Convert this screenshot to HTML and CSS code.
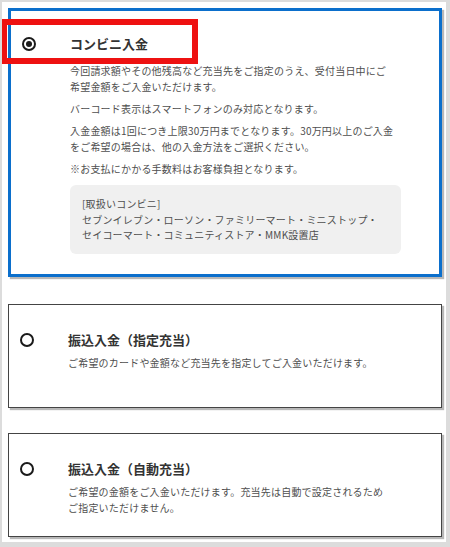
FILE: index.html
```html
<!DOCTYPE html>
<html lang="ja">
<head>
<meta charset="utf-8">
<title>入金方法</title>
<link rel="stylesheet" href="styles.css">
</head>
<body>
<div class="frame">
  <div class="card selected">
    <span class="radio checked"></span>
    <div class="body">
      <h2 class="title">コンビニ入金</h2>
      <p class="text">今回請求額やその他残高など充当先をご指定のうえ、受付当日中にご<br>希望金額をご入金いただけます。</p>
      <p class="text">バーコード表示はスマートフォンのみ対応となります。</p>
      <p class="text">入金金額は1回につき上限30万円までとなります。30万円以上のご入金<br>をご希望の場合は、他の入金方法をご選択ください。</p>
      <p class="text">※お支払にかかる手数料はお客様負担となります。</p>
      <div class="note">[取扱いコンビニ]<br>セブンイレブン・ローソン・ファミリーマート・ミニストップ・<br>セイコーマート・コミュニティストア・MMK設置店</div>
    </div>
  </div>
  <div class="card">
    <span class="radio"></span>
    <div class="body">
      <h2 class="title">振込入金（指定充当）</h2>
      <p class="text">ご希望のカードや金額など充当先を指定してご入金いただけます。</p>
    </div>
  </div>
  <div class="card">
    <span class="radio"></span>
    <div class="body">
      <h2 class="title">振込入金（自動充当）</h2>
      <p class="text">ご希望の金額をご入金いただけます。充当先は自動で設定されるため<br>ご指定いただけません。</p>
    </div>
  </div>
  <div class="highlight"></div>
</div>
</body>
</html>
```
FILE: styles.css
```css
* { box-sizing: border-box; }
html, body { margin: 0; padding: 0; background: #fff; }
body {
  font-family: "Noto Sans CJK JP", "Noto Sans", sans-serif;
  color: #4e4e4e;
}
.frame {
  position: relative;
  width: 450px;
  height: 547px;
  border-style: solid;
  border-color: #dcdcdc;
  border-width: 2px 4px 5px 2px;
  padding: 6px 4px 0 6px;
  display: flex;
  flex-direction: column;
  gap: 25px;
  overflow: hidden;
}
.card {
  display: flex;
  align-items: flex-start;
  border: 1px solid #444;
  background: #fff;
  box-shadow: 2px 2px 1px #b8b8b8;
  padding: 25px 38px 20px 11px;
  min-height: 104px;
}
.card.selected {
  border: 3px solid #0b6fcc;
  padding-top: 23px;
  padding-bottom: 20px;
  margin-bottom: 2px;
}
.radio {
  flex: 0 0 14px;
  width: 14px;
  height: 14px;
  margin-top: 3px;
  margin-right: 34px;
  border: 2px solid #1a1a1a;
  border-radius: 50%;
  display: flex;
  align-items: center;
  justify-content: center;
}
.radio.checked::after {
  content: "";
  width: 6px;
  height: 6px;
  border-radius: 50%;
  background: #1a1a1a;
}
.body { flex: 1; min-width: 0; }
.title {
  margin: 0;
  font-size: 13px;
  line-height: 20px;
  font-weight: 700;
  color: #333;
}
.text {
  margin: 6px 0 0;
  font-size: 10px;
  line-height: 16px;
  letter-spacing: 0.2px;
  white-space: nowrap;
}
.title + .text { margin-top: 5px; }
.selected .title + .text { margin-top: 9px; }
.note {
  margin-top: 8px;
  background: #f0f0f0;
  border-radius: 6px;
  padding: 11px 12px;
  font-size: 10px;
  line-height: 15.5px;
  letter-spacing: 0.2px;
  white-space: nowrap;
}
.highlight {
  position: absolute;
  left: -1px;
  top: 17px;
  width: 197px;
  height: 45px;
  border: 6px solid #ee1111;
}
```
